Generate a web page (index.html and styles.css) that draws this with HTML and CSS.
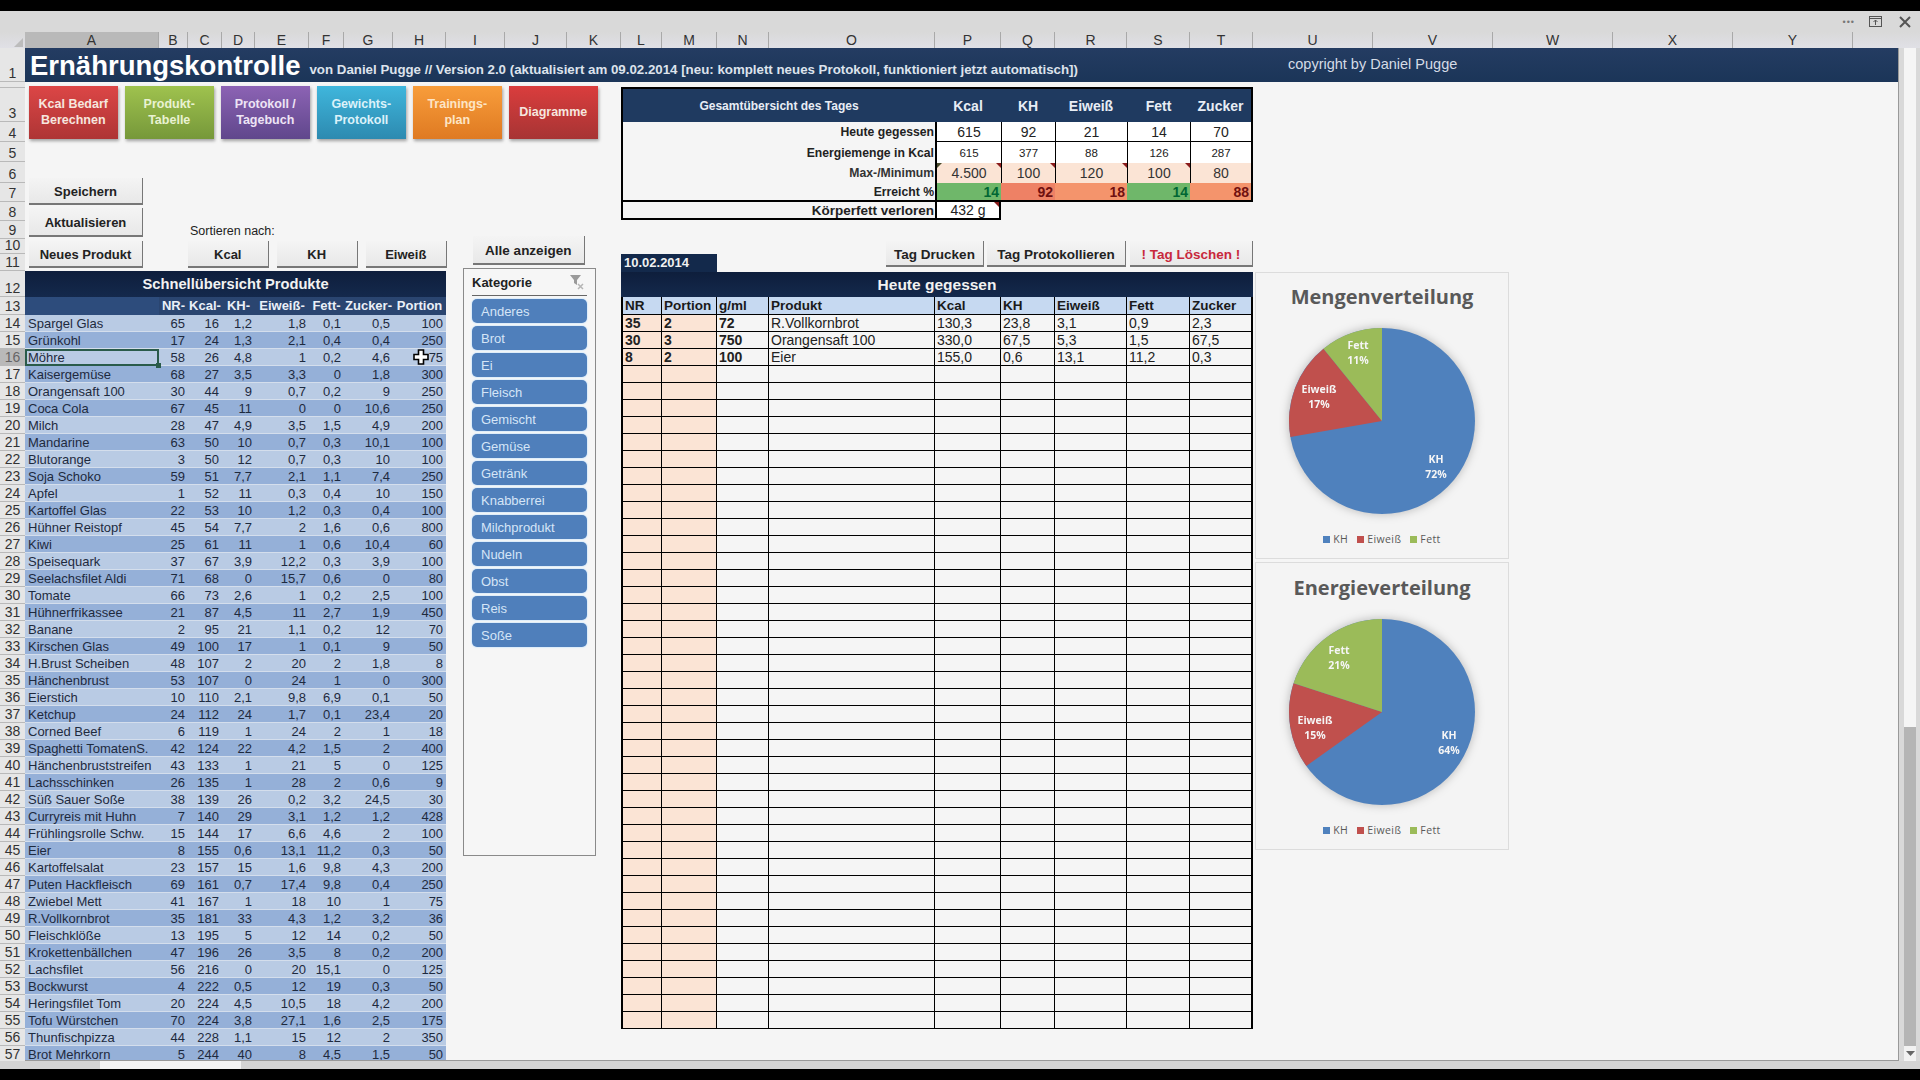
FILE: index.html
```html
<!DOCTYPE html>
<html lang="de">
<head>
    <meta charset="UTF-8">
    <title>Ernährungskontrolle</title>
    <link rel="stylesheet" href="styles.css">
</head>
<body>

<div class="black-bar"></div>

<div class="window-bar">
    <span class="window-dots">•••</span>
    <svg class="window-restore" width="14" height="12" viewBox="0 0 14 12">
        <rect x="0.5" y="0.5" width="12" height="10" fill="none" stroke="#555"/>
        <path d="M0.5 2.5H12.5M6.5 9V4M4.5 6L6.5 4L8.5 6" fill="none" stroke="#555"/>
    </svg>
    <svg class="window-close" width="12" height="12" viewBox="0 0 12 12">
        <path d="M1 1L11 11M11 1L1 11" stroke="#555" stroke-width="2"/>
    </svg>
</div>

<div class="col-head">
    <div class="corner"><span class="corner-mark"></span></div>
    <div class="col-selected">A</div><div>B</div><div>C</div><div>D</div><div>E</div><div>F</div><div>G</div><div>H</div>
    <div>I</div><div>J</div><div>K</div><div>L</div><div>M</div><div>N</div><div>O</div><div>P</div><div>Q</div>
    <div>R</div><div>S</div><div>T</div><div>U</div><div>V</div><div>W</div><div>X</div><div>Y</div><div></div>
</div>

<div class="workspace">
    <div class="row-head">
        <div>1</div><div></div><div>3</div><div>4</div><div>5</div><div>6</div><div>7</div><div>8</div><div>9</div><div>10</div>
        <div>11</div><div>12</div><div>13</div><div>14</div><div>15</div><div class="row-selected">16</div><div>17</div><div>18</div><div>19</div><div>20</div>
        <div>21</div><div>22</div><div>23</div><div>24</div><div>25</div><div>26</div><div>27</div><div>28</div><div>29</div><div>30</div>
        <div>31</div><div>32</div><div>33</div><div>34</div><div>35</div><div>36</div><div>37</div><div>38</div><div>39</div><div>40</div>
        <div>41</div><div>42</div><div>43</div><div>44</div><div>45</div><div>46</div><div>47</div><div>48</div><div>49</div><div>50</div>
        <div>51</div><div>52</div><div>53</div><div>54</div><div>55</div><div>56</div><div>57</div>
    </div>

    <div class="sheet">
        <div class="title-band">
            <div class="title-main">
                <h1>Ernährungskontrolle</h1>
                <span class="title-sub">von Daniel Pugge // Version 2.0 (aktualisiert am 09.02.2014 [neu: komplett neues Protokoll, funktioniert jetzt automatisch])</span>
            </div>
            <span class="copyright">copyright by Daniel Pugge</span>
        </div>

        <div class="sheet-body">
            <div class="left-pane">
                <div class="nav-row">
                    <a class="nav-btn nav-red">Kcal Bedarf<br>Berechnen</a>
                    <a class="nav-btn nav-green">Produkt-<br>Tabelle</a>
                    <a class="nav-btn nav-purple">Protokoll /<br>Tagebuch</a>
                    <a class="nav-btn nav-teal">Gewichts-<br>Protokoll</a>
                    <a class="nav-btn nav-orange">Trainings-<br>plan</a>
                    <a class="nav-btn nav-crimson">Diagramme</a>
                </div>

                <div class="lower">
                    <div class="products">
                        <div class="tools">
                            <div class="side-btns">
                                <button class="btn btn-save">Speichern</button>
                                <button class="btn btn-update">Aktualisieren</button>
                                <button class="btn btn-new">Neues Produkt</button>
                            </div>
                            <div class="sort">
                                <span class="sort-label">Sortieren nach:</span>
                                <div class="sort-btns">
                                    <button class="btn">Kcal</button>
                                    <button class="btn">KH</button>
                                    <button class="btn">Eiweiß</button>
                                </div>
                            </div>
                        </div>

                        <table class="product-table">
                            <colgroup>
                                <col class="w134"><col class="w29"><col class="w34"><col class="w33"><col class="w54"><col class="w35"><col class="w49"><col class="w53">
                            </colgroup>
                            <thead>
                                <tr class="product-title"><th colspan="8">Schnellübersicht Produkte</th></tr>
                                <tr class="product-head"><th class="name-head"></th><th>NR-</th><th>Kcal-</th><th>KH-</th><th>Eiweiß-</th><th>Fett-</th><th>Zucker-</th><th>Portion</th></tr>
                            </thead>
                            <tbody>
                                <tr><td>Spargel Glas</td><td>65</td><td>16</td><td>1,2</td><td>1,8</td><td>0,1</td><td>0,5</td><td>100</td></tr>
                                <tr><td>Grünkohl</td><td>17</td><td>24</td><td>1,3</td><td>2,1</td><td>0,4</td><td>0,4</td><td>250</td></tr>
                                <tr><td class="cell-active">Möhre</td><td>58</td><td>26</td><td>4,8</td><td>1</td><td>0,2</td><td>4,6</td><td class="cell-cursor">75
                                    <svg class="cross-cursor" width="16" height="16" viewBox="0 0 16 16"><path d="M5.5 1H10.5V5.5H15V10.5H10.5V15H5.5V10.5H1V5.5H5.5Z" fill="#fff" stroke="#000" stroke-width="1.6"/></svg></td></tr>
                                <tr><td>Kaisergemüse</td><td>68</td><td>27</td><td>3,5</td><td>3,3</td><td>0</td><td>1,8</td><td>300</td></tr>
                                <tr><td>Orangensaft 100</td><td>30</td><td>44</td><td>9</td><td>0,7</td><td>0,2</td><td>9</td><td>250</td></tr>
                                <tr><td>Coca Cola</td><td>67</td><td>45</td><td>11</td><td>0</td><td>0</td><td>10,6</td><td>250</td></tr>
                                <tr><td>Milch</td><td>28</td><td>47</td><td>4,9</td><td>3,5</td><td>1,5</td><td>4,9</td><td>200</td></tr>
                                <tr><td>Mandarine</td><td>63</td><td>50</td><td>10</td><td>0,7</td><td>0,3</td><td>10,1</td><td>100</td></tr>
                                <tr><td>Blutorange</td><td>3</td><td>50</td><td>12</td><td>0,7</td><td>0,3</td><td>10</td><td>100</td></tr>
                                <tr><td>Soja Schoko</td><td>59</td><td>51</td><td>7,7</td><td>2,1</td><td>1,1</td><td>7,4</td><td>250</td></tr>
                                <tr><td>Apfel</td><td>1</td><td>52</td><td>11</td><td>0,3</td><td>0,4</td><td>10</td><td>150</td></tr>
                                <tr><td>Kartoffel Glas</td><td>22</td><td>53</td><td>10</td><td>1,2</td><td>0,3</td><td>0,4</td><td>100</td></tr>
                                <tr><td>Hühner Reistopf</td><td>45</td><td>54</td><td>7,7</td><td>2</td><td>1,6</td><td>0,6</td><td>800</td></tr>
                                <tr><td>Kiwi</td><td>25</td><td>61</td><td>11</td><td>1</td><td>0,6</td><td>10,4</td><td>60</td></tr>
                                <tr><td>Speisequark</td><td>37</td><td>67</td><td>3,9</td><td>12,2</td><td>0,3</td><td>3,9</td><td>100</td></tr>
                                <tr><td>Seelachsfilet Aldi</td><td>71</td><td>68</td><td>0</td><td>15,7</td><td>0,6</td><td>0</td><td>80</td></tr>
                                <tr><td>Tomate</td><td>66</td><td>73</td><td>2,6</td><td>1</td><td>0,2</td><td>2,5</td><td>100</td></tr>
                                <tr><td>Hühnerfrikassee</td><td>21</td><td>87</td><td>4,5</td><td>11</td><td>2,7</td><td>1,9</td><td>450</td></tr>
                                <tr><td>Banane</td><td>2</td><td>95</td><td>21</td><td>1,1</td><td>0,2</td><td>12</td><td>70</td></tr>
                                <tr><td>Kirschen Glas</td><td>49</td><td>100</td><td>17</td><td>1</td><td>0,1</td><td>9</td><td>50</td></tr>
                                <tr><td>H.Brust Scheiben</td><td>48</td><td>107</td><td>2</td><td>20</td><td>2</td><td>1,8</td><td>8</td></tr>
                                <tr><td>Hänchenbrust</td><td>53</td><td>107</td><td>0</td><td>24</td><td>1</td><td>0</td><td>300</td></tr>
                                <tr><td>Eierstich</td><td>10</td><td>110</td><td>2,1</td><td>9,8</td><td>6,9</td><td>0,1</td><td>50</td></tr>
                                <tr><td>Ketchup</td><td>24</td><td>112</td><td>24</td><td>1,7</td><td>0,1</td><td>23,4</td><td>20</td></tr>
                                <tr><td>Corned Beef</td><td>6</td><td>119</td><td>1</td><td>24</td><td>2</td><td>1</td><td>18</td></tr>
                                <tr><td>Spaghetti TomatenS.</td><td>42</td><td>124</td><td>22</td><td>4,2</td><td>1,5</td><td>2</td><td>400</td></tr>
                                <tr><td>Hänchenbruststreifen</td><td>43</td><td>133</td><td>1</td><td>21</td><td>5</td><td>0</td><td>125</td></tr>
                                <tr><td>Lachsschinken</td><td>26</td><td>135</td><td>1</td><td>28</td><td>2</td><td>0,6</td><td>9</td></tr>
                                <tr><td>Süß Sauer Soße</td><td>38</td><td>139</td><td>26</td><td>0,2</td><td>3,2</td><td>24,5</td><td>30</td></tr>
                                <tr><td>Curryreis mit Huhn</td><td>7</td><td>140</td><td>29</td><td>3,1</td><td>1,2</td><td>1,2</td><td>428</td></tr>
                                <tr><td>Frühlingsrolle Schw.</td><td>15</td><td>144</td><td>17</td><td>6,6</td><td>4,6</td><td>2</td><td>100</td></tr>
                                <tr><td>Eier</td><td>8</td><td>155</td><td>0,6</td><td>13,1</td><td>11,2</td><td>0,3</td><td>50</td></tr>
                                <tr><td>Kartoffelsalat</td><td>23</td><td>157</td><td>15</td><td>1,6</td><td>9,8</td><td>4,3</td><td>200</td></tr>
                                <tr><td>Puten Hackfleisch</td><td>69</td><td>161</td><td>0,7</td><td>17,4</td><td>9,8</td><td>0,4</td><td>250</td></tr>
                                <tr><td>Zwiebel Mett</td><td>41</td><td>167</td><td>1</td><td>18</td><td>10</td><td>1</td><td>75</td></tr>
                                <tr><td>R.Vollkornbrot</td><td>35</td><td>181</td><td>33</td><td>4,3</td><td>1,2</td><td>3,2</td><td>36</td></tr>
                                <tr><td>Fleischklöße</td><td>13</td><td>195</td><td>5</td><td>12</td><td>14</td><td>0,2</td><td>50</td></tr>
                                <tr><td>Krokettenbällchen</td><td>47</td><td>196</td><td>26</td><td>3,5</td><td>8</td><td>0,2</td><td>200</td></tr>
                                <tr><td>Lachsfilet</td><td>56</td><td>216</td><td>0</td><td>20</td><td>15,1</td><td>0</td><td>125</td></tr>
                                <tr><td>Bockwurst</td><td>4</td><td>222</td><td>0,5</td><td>12</td><td>19</td><td>0,3</td><td>50</td></tr>
                                <tr><td>Heringsfilet Tom</td><td>20</td><td>224</td><td>4,5</td><td>10,5</td><td>18</td><td>4,2</td><td>200</td></tr>
                                <tr><td>Tofu Würstchen</td><td>70</td><td>224</td><td>3,8</td><td>27,1</td><td>1,6</td><td>2,5</td><td>175</td></tr>
                                <tr><td>Thunfischpizza</td><td>44</td><td>228</td><td>1,1</td><td>15</td><td>12</td><td>2</td><td>350</td></tr>
                                <tr><td>Brot Mehrkorn</td><td>5</td><td>244</td><td>40</td><td>8</td><td>4,5</td><td>1,5</td><td>50</td></tr>
                            </tbody>
                        </table>
                    </div>

                    <div class="filter">
                        <button class="btn btn-all">Alle anzeigen</button>
                        <div class="slicer">
                            <div class="slicer-head">
                                <span>Kategorie</span>
                                <svg width="16" height="16" viewBox="0 0 16 16">
                                    <path d="M1 1H12L8 6V11L5 9V6Z" fill="#9a9a9a"/>
                                    <path d="M9 10L14 15M14 10L9 15" stroke="#b5b5b5" stroke-width="1.5"/>
                                </svg>
                            </div>
                            <div class="slicer-item">Anderes</div>
                            <div class="slicer-item">Brot</div>
                            <div class="slicer-item">Ei</div>
                            <div class="slicer-item">Fleisch</div>
                            <div class="slicer-item">Gemischt</div>
                            <div class="slicer-item">Gemüse</div>
                            <div class="slicer-item">Getränk</div>
                            <div class="slicer-item">Knabberrei</div>
                            <div class="slicer-item">Milchprodukt</div>
                            <div class="slicer-item">Nudeln</div>
                            <div class="slicer-item">Obst</div>
                            <div class="slicer-item">Reis</div>
                            <div class="slicer-item">Soße</div>
                        </div>
                    </div>
                </div>
            </div>

            <div class="center-pane">
                <table class="summary">
                    <colgroup>
                        <col class="w314"><col class="w66"><col class="w54"><col class="w72"><col class="w63"><col class="w63">
                    </colgroup>
                    <tr class="summary-head">
                        <th class="summary-title">Gesamtübersicht des Tages</th><th>Kcal</th><th>KH</th><th>Eiweiß</th><th>Fett</th><th>Zucker</th>
                    </tr>
                    <tr class="row-today">
                        <td class="summary-label">Heute gegessen</td><td>615</td><td>92</td><td>21</td><td>14</td><td>70</td>
                    </tr>
                    <tr class="row-energy">
                        <td class="summary-label">Energiemenge in Kcal</td><td>615</td><td>377</td><td>88</td><td>126</td><td>287</td>
                    </tr>
                    <tr class="row-limit">
                        <td class="summary-label">Max-/Minimum</td><td class="note note-left">4.500</td><td class="note">100</td><td class="note">120</td><td class="note">100</td><td>80</td>
                    </tr>
                    <tr class="row-reached">
                        <td class="summary-label">Erreicht %</td><td class="good">14</td><td class="bad">92</td><td class="worse">18</td><td class="good">14</td><td class="worse">88</td>
                    </tr>
                    <tr class="row-fat">
                        <td class="fat-label">Körperfett verloren</td><td class="fat-value note">432 g</td><td colspan="4" class="fat-rest"></td>
                    </tr>
                </table>

                <div class="day-row">
                    <div class="day-date">10.02.2014</div>
                    <button class="btn btn-print">Tag Drucken</button>
                    <button class="btn btn-log">Tag Protokollieren</button>
                    <button class="btn btn-delete">! Tag Löschen !</button>
                </div>

                <table class="today">
                    <colgroup>
                        <col class="w41"><col class="w55"><col class="w52"><col class="w166"><col class="w66"><col class="w54"><col class="w72"><col class="w63"><col class="w63">
                    </colgroup>
                    <thead>
                        <tr class="today-title"><th colspan="9">Heute gegessen</th></tr>
                        <tr class="today-head"><th>NR</th><th>Portion</th><th>g/ml</th><th>Produkt</th><th>Kcal</th><th>KH</th><th>Eiweiß</th><th>Fett</th><th>Zucker</th></tr>
                    </thead>
                    <tbody>
                        <tr><td>35</td><td>2</td><td>72</td><td>R.Vollkornbrot</td><td>130,3</td><td>23,8</td><td>3,1</td><td>0,9</td><td>2,3</td></tr>
                        <tr><td>30</td><td>3</td><td>750</td><td>Orangensaft 100</td><td>330,0</td><td>67,5</td><td>5,3</td><td>1,5</td><td>67,5</td></tr>
                        <tr><td>8</td><td>2</td><td>100</td><td>Eier</td><td>155,0</td><td>0,6</td><td>13,1</td><td>11,2</td><td>0,3</td></tr>
                        <tr><td></td><td></td><td></td><td></td><td></td><td></td><td></td><td></td><td></td></tr>
                        <tr><td></td><td></td><td></td><td></td><td></td><td></td><td></td><td></td><td></td></tr>
                        <tr><td></td><td></td><td></td><td></td><td></td><td></td><td></td><td></td><td></td></tr>
                        <tr><td></td><td></td><td></td><td></td><td></td><td></td><td></td><td></td><td></td></tr>
                        <tr><td></td><td></td><td></td><td></td><td></td><td></td><td></td><td></td><td></td></tr>
                        <tr><td></td><td></td><td></td><td></td><td></td><td></td><td></td><td></td><td></td></tr>
                        <tr><td></td><td></td><td></td><td></td><td></td><td></td><td></td><td></td><td></td></tr>
                        <tr><td></td><td></td><td></td><td></td><td></td><td></td><td></td><td></td><td></td></tr>
                        <tr><td></td><td></td><td></td><td></td><td></td><td></td><td></td><td></td><td></td></tr>
                        <tr><td></td><td></td><td></td><td></td><td></td><td></td><td></td><td></td><td></td></tr>
                        <tr><td></td><td></td><td></td><td></td><td></td><td></td><td></td><td></td><td></td></tr>
                        <tr><td></td><td></td><td></td><td></td><td></td><td></td><td></td><td></td><td></td></tr>
                        <tr><td></td><td></td><td></td><td></td><td></td><td></td><td></td><td></td><td></td></tr>
                        <tr><td></td><td></td><td></td><td></td><td></td><td></td><td></td><td></td><td></td></tr>
                        <tr><td></td><td></td><td></td><td></td><td></td><td></td><td></td><td></td><td></td></tr>
                        <tr><td></td><td></td><td></td><td></td><td></td><td></td><td></td><td></td><td></td></tr>
                        <tr><td></td><td></td><td></td><td></td><td></td><td></td><td></td><td></td><td></td></tr>
                        <tr><td></td><td></td><td></td><td></td><td></td><td></td><td></td><td></td><td></td></tr>
                        <tr><td></td><td></td><td></td><td></td><td></td><td></td><td></td><td></td><td></td></tr>
                        <tr><td></td><td></td><td></td><td></td><td></td><td></td><td></td><td></td><td></td></tr>
                        <tr><td></td><td></td><td></td><td></td><td></td><td></td><td></td><td></td><td></td></tr>
                        <tr><td></td><td></td><td></td><td></td><td></td><td></td><td></td><td></td><td></td></tr>
                        <tr><td></td><td></td><td></td><td></td><td></td><td></td><td></td><td></td><td></td></tr>
                        <tr><td></td><td></td><td></td><td></td><td></td><td></td><td></td><td></td><td></td></tr>
                        <tr><td></td><td></td><td></td><td></td><td></td><td></td><td></td><td></td><td></td></tr>
                        <tr><td></td><td></td><td></td><td></td><td></td><td></td><td></td><td></td><td></td></tr>
                        <tr><td></td><td></td><td></td><td></td><td></td><td></td><td></td><td></td><td></td></tr>
                        <tr><td></td><td></td><td></td><td></td><td></td><td></td><td></td><td></td><td></td></tr>
                        <tr><td></td><td></td><td></td><td></td><td></td><td></td><td></td><td></td><td></td></tr>
                        <tr><td></td><td></td><td></td><td></td><td></td><td></td><td></td><td></td><td></td></tr>
                        <tr><td></td><td></td><td></td><td></td><td></td><td></td><td></td><td></td><td></td></tr>
                        <tr><td></td><td></td><td></td><td></td><td></td><td></td><td></td><td></td><td></td></tr>
                        <tr><td></td><td></td><td></td><td></td><td></td><td></td><td></td><td></td><td></td></tr>
                        <tr><td></td><td></td><td></td><td></td><td></td><td></td><td></td><td></td><td></td></tr>
                        <tr><td></td><td></td><td></td><td></td><td></td><td></td><td></td><td></td><td></td></tr>
                        <tr><td></td><td></td><td></td><td></td><td></td><td></td><td></td><td></td><td></td></tr>
                        <tr><td></td><td></td><td></td><td></td><td></td><td></td><td></td><td></td><td></td></tr>
                        <tr><td></td><td></td><td></td><td></td><td></td><td></td><td></td><td></td><td></td></tr>
                        <tr><td></td><td></td><td></td><td></td><td></td><td></td><td></td><td></td><td></td></tr>
                    </tbody>
                </table>
            </div>

            <div class="chart-pane">
                <div class="chart">
                    <h2>Mengenverteilung</h2>
                    <svg class="pie" width="252" height="198" viewBox="-126 -99 252 198">
                        <circle r="93" fill="#4f81bd"/>
                        <path d="M0 0L-91.6 16.1A93 93 0 0 1 -58.5 -72.3Z" fill="#c0504d"/>
                        <path d="M0 0L-58.5 -72.3A93 93 0 0 1 0 -93Z" fill="#9bbb59"/>
                        <text class="pie-label" x="-24" y="-72">Fett</text>
                        <text class="pie-label" x="-24" y="-57">11%</text>
                        <text class="pie-label" x="-63" y="-28">Eiweiß</text>
                        <text class="pie-label" x="-63" y="-13">17%</text>
                        <text class="pie-label" x="54" y="42">KH</text>
                        <text class="pie-label" x="54" y="57">72%</text>
                    </svg>
                    <div class="legend">
                        <span class="legend-item"><i class="swatch swatch-blue"></i>KH</span>
                        <span class="legend-item"><i class="swatch swatch-red"></i>Eiweiß</span>
                        <span class="legend-item"><i class="swatch swatch-green"></i>Fett</span>
                    </div>
                </div>
                <div class="chart chart-energy">
                    <h2>Energieverteilung</h2>
                    <svg class="pie" width="252" height="198" viewBox="-126 -99 252 198">
                        <circle r="93" fill="#4f81bd"/>
                        <path d="M0 0L-75.7 54A93 93 0 0 1 -88.4 -28.7Z" fill="#c0504d"/>
                        <path d="M0 0L-88.4 -28.7A93 93 0 0 1 0 -93Z" fill="#9bbb59"/>
                        <text class="pie-label" x="-43" y="-58">Fett</text>
                        <text class="pie-label" x="-43" y="-43">21%</text>
                        <text class="pie-label" x="-67" y="12">Eiweiß</text>
                        <text class="pie-label" x="-67" y="27">15%</text>
                        <text class="pie-label" x="67" y="27">KH</text>
                        <text class="pie-label" x="67" y="42">64%</text>
                    </svg>
                    <div class="legend">
                        <span class="legend-item"><i class="swatch swatch-blue"></i>KH</span>
                        <span class="legend-item"><i class="swatch swatch-red"></i>Eiweiß</span>
                        <span class="legend-item"><i class="swatch swatch-green"></i>Fett</span>
                    </div>
                </div>
            </div>
        </div>
    </div>

    <div class="v-scroll">
        <div class="scroll-arrow"><svg width="9" height="5" viewBox="0 0 9 5"><path d="M0 5L4.5 0L9 5Z" fill="#666"/></svg></div>
        <div class="scroll-light"></div>
        <div class="scroll-dark"></div>
        <div class="scroll-arrow"><svg width="9" height="5" viewBox="0 0 9 5"><path d="M0 0L4.5 5L9 0Z" fill="#666"/></svg></div>
    </div>
</div>

<div class="h-scroll"><span class="h-thumb"></span></div>
<div class="black-bar black-bar-bottom"></div>

</body>
</html>
```

FILE: styles.css
```css
* {
    box-sizing: border-box;
}
html, body {
    height: 100%;
}
body {
    margin: 0;
    width: 1920px;
    height: 1080px;
    overflow: hidden;
    display: flex;
    flex-direction: column;
    font-family: "Liberation Sans", Arial, sans-serif;
    font-size: 13px;
    color: #222;
    background-color: #f5f5f5;
}
h1, h2 {
    margin: 0;
}

/* window chrome */
.black-bar {
    height: 11px;
    flex: none;
    background-color: #000;
}
.black-bar-bottom {
    height: 11px;
}
.window-bar {
    height: 21px;
    flex: none;
    display: flex;
    align-items: center;
    background-color: #d9d9d9;
    padding-right: 9px;
}
.window-dots {
    margin-left: auto;
    font-size: 9px;
    letter-spacing: 1px;
    color: #777;
}
.window-restore {
    margin-left: 14px;
}
.window-close {
    margin-left: 16px;
}

/* column and row headers */
.col-head {
    height: 16px;
    flex: none;
    display: grid;
    grid-template-columns: 25px 134px 29px 34px 33px 54px 35px 49px 53px 59px 62px 54px 41px 55px 52px 166px 66px 54px 72px 63px 63px 120px 120px 120px 120px 120px 1fr;
    background: linear-gradient(#d9d9d9, #e0e0e6);
    font-size: 14px;
    line-height: 16px;
    text-align: center;
    color: #333;
}
.col-head div {
    border-right: 1px solid #a9a9a9;
}
.col-head .corner {
    border-right: none;
    position: relative;
}
.corner-mark {
    position: absolute;
    right: 2px;
    bottom: 1px;
    border-left: 9px solid transparent;
    border-bottom: 9px solid #bcbcbc;
}
.col-head .col-selected {
    background-color: #b9b9b9;
}
.col-head div:last-child {
    border-right: none;
}
.workspace {
    flex: 1;
    min-height: 0;
    display: flex;
    overflow: hidden;
}
.row-head {
    width: 25px;
    flex: none;
    display: grid;
    grid-template-rows: 34px 6px 34px 20px 20px 21px 19px 19px 18px 15px 17px 26px 18px repeat(44, 17px);
    background-color: #e6e6e6;
    font-size: 14px;
    line-height: 14px;
    text-align: center;
    color: #333;
}
.row-head div {
    display: flex;
    align-items: flex-end;
    justify-content: center;
    padding-bottom: 1px;
    border-bottom: 1px solid #b9b9b9;
}
.row-head .row-selected {
    background-color: #b9b9b9;
    color: #666;
}

/* sheet */
.sheet {
    width: 1873px;
    flex: none;
    display: flex;
    flex-direction: column;
    border-bottom: 1px solid #999;
    overflow: hidden;
}
.title-band {
    height: 34px;
    flex: none;
    display: grid;
    grid-template-columns: 1263px 1fr;
    background: linear-gradient(#243c62, #1b3558);
    color: #fff;
}
.title-main {
    display: flex;
    align-items: center;
    padding-left: 5px;
}
h1 {
    font-size: 27.5px;
    line-height: 36px;
    font-weight: bold;
}
.title-sub {
    margin-left: 9px;
    margin-top: 7px;
    font-size: 13.3px;
    font-weight: bold;
    color: #dde3ec;
}
.copyright {
    font-size: 14.5px;
    line-height: 33px;
    color: #d5dbe6;
}
.sheet-body {
    flex: 1;
    display: flex;
}
.left-pane {
    width: 596px;
    flex: none;
}

/* coloured navigation buttons */
.nav-row {
    display: flex;
    gap: 7.5px;
    margin: 4px 0 0 4px;
}
.nav-btn {
    width: 88.5px;
    height: 53px;
    padding-bottom: 2px;
    display: flex;
    align-items: center;
    justify-content: center;
    text-align: center;
    font-size: 12.5px;
    line-height: 16px;
    font-weight: bold;
    color: #f6e6df;
    box-shadow: 1px 2px 3px rgba(0, 0, 0, 0.35);
}
.nav-red {
    background: linear-gradient(#dc4646, #ae3535);
}
.nav-green {
    background: linear-gradient(#9fc24e, #76983a);
    color: #e9f2d2;
}
.nav-purple {
    background: linear-gradient(#8c63b4, #60478c);
    color: #eee4f5;
}
.nav-teal {
    background: linear-gradient(#3fb6dc, #2d8ab0);
    color: #dcf2fa;
}
.nav-orange {
    background: linear-gradient(#f89d3b, #df7a22);
    color: #fde5c6;
}
.nav-crimson {
    background: linear-gradient(#da3d3d, #a73434);
}

/* grey form buttons */
.btn {
    font-family: inherit;
    font-size: 13px;
    font-weight: bold;
    color: #222;
    padding: 2px 0 0;
    background: linear-gradient(#f4f4f4, #e8e8e8);
    border: none;
    border-right: 1px solid #777;
    border-bottom: 2px solid #777;
}
.lower {
    display: flex;
}
.products {
    width: 421px;
    flex: none;
}
.tools {
    height: 132px;
    display: flex;
}
.side-btns {
    width: 163px;
    padding: 39px 0 0 4px;
    flex: none;
}
.side-btns .btn {
    display: block;
    width: 114px;
}
.btn-save {
    height: 27px;
}
.btn-update {
    height: 29px;
    margin-top: 3px;
}
.btn-new {
    height: 27px;
    margin-top: 4px;
}
.sort {
    flex: 1;
    padding-top: 85px;
}
.sort-label {
    display: block;
    font-size: 12.5px;
    line-height: 14px;
    margin-left: 2px;
}
.sort-btns {
    display: flex;
    gap: 8.5px;
    margin-top: 3px;
}
.sort-btns .btn {
    width: 80.5px;
    height: 27px;
}

/* product table */
table {
    table-layout: fixed;
    border-collapse: separate;
    border-spacing: 0;
}
.w29 { width: 29px; }
.w33 { width: 33px; }
.w34 { width: 34px; }
.w35 { width: 35px; }
.w41 { width: 41px; }
.w49 { width: 49px; }
.w52 { width: 52px; }
.w53 { width: 53px; }
.w54 { width: 54px; }
.w55 { width: 55px; }
.w63 { width: 63px; }
.w66 { width: 66px; }
.w72 { width: 72px; }
.w134 { width: 134px; }
.w166 { width: 166px; }
.w314 { width: 314px; }

.product-table {
    width: 421px;
}
.product-title th {
    height: 26px;
    padding: 0;
    font-size: 14.7px;
    color: #f2f2f2;
    background: linear-gradient(#0e1e3c, #14294c);
}
.product-head th {
    height: 18px;
    padding: 0 0 1px;
    font-size: 13px;
    line-height: 16px;
    color: #eaf0f8;
    white-space: nowrap;
    background-color: #2a4570;
}
.product-head .name-head {
    background-color: #2d4c7c;
}
.product-table td {
    height: 17px;
    padding: 1px 3px 0;
    line-height: 16px;
    text-align: right;
    white-space: nowrap;
    color: #1e2a3e;
    box-shadow: inset 0 -1px 0 #d4deec;
}
.product-table td:first-child {
    text-align: left;
}
.product-table tbody tr:nth-child(odd) td {
    background-color: #b9cbe4;
}
.product-table tbody tr:nth-child(even) td {
    background-color: #95b0d8;
}
.product-table .cell-active {
    position: relative;
    outline: 2px solid #2a5b4a;
    outline-offset: -2px;
}
.cell-active::after {
    content: "";
    position: absolute;
    right: -2px;
    bottom: -2px;
    width: 5px;
    height: 5px;
    background-color: #2a5b4a;
}
.cell-cursor {
    position: relative;
}
.cross-cursor {
    position: absolute;
    left: 20px;
    top: 0;
}

/* slicer */
.filter {
    width: 175px;
    flex: none;
    padding-top: 97px;
}
.btn-all {
    display: block;
    width: 111.5px;
    height: 29px;
    margin-left: 27px;
    font-size: 13.5px;
}
.slicer {
    width: 132.5px;
    height: 588px;
    margin: 3px 0 0 17px;
    padding: 0 8px;
    border: 1px solid #8a8a8a;
    background-color: #f6f6f6;
}
.slicer-head {
    height: 27px;
    display: flex;
    align-items: center;
    justify-content: space-between;
    margin-bottom: 3px;
    border-bottom: 1px solid #666;
    font-size: 13px;
    font-weight: bold;
}
.slicer-head svg {
    margin-right: 2px;
}
.slicer-item {
    height: 24px;
    margin-bottom: 3px;
    padding-left: 9px;
    border-radius: 5px;
    background-color: #4f7fbb;
    box-shadow: 0 0 1px 1px #dcedfb;
    line-height: 25px;
    color: #d5e5f7;
}

/* daily summary */
.center-pane {
    width: 632px;
    flex: none;
    padding-top: 5px;
}
.summary {
    width: 632px;
}
.summary th {
    padding: 0;
    height: 35px;
    font-size: 14px;
    color: #e8edf5;
    background-color: #1f3a60;
    border-top: 2px solid #000;
}
.summary th:first-child {
    border-left: 2px solid #000;
}
.summary th:last-child {
    border-right: 2px solid #000;
}
.summary .summary-title {
    font-size: 12px;
}
.summary td {
    padding: 0;
    text-align: center;
    font-size: 14px;
    background-color: #fff;
    border-left: 1px solid #000;
}
.summary td:nth-child(2) {
    border-left: 2px solid #000;
}
.summary .summary-label {
    text-align: right;
    font-size: 12.2px;
    font-weight: bold;
    padding-right: 1px;
    border-left: 2px solid #000;
    background-color: #f5f5f5;
}
.summary td:last-child {
    border-right: 2px solid #000;
}
.row-today td {
    height: 20px;
    border-bottom: 1px solid #000;
}
.summary .row-today .summary-label,
.summary .row-energy .summary-label,
.summary .row-limit .summary-label {
    border-bottom: none;
}
.row-energy td {
    height: 21px;
    font-size: 11.5px;
}
.summary .row-energy td:not(.summary-label) {
    font-size: 11.5px;
}
.row-limit td {
    height: 20px;
    background-color: #fbe4d5;
    color: #333;
}
.row-reached td {
    height: 19px;
    text-align: right;
    font-weight: bold;
    padding-right: 2px;
    border-left: none;
    border-bottom: 2px solid #000;
}
.summary .row-reached .good {
    background-color: #6fb76a;
    color: #063;
}
.summary .row-reached .bad {
    background-color: #ee8165;
    color: #701010;
}
.summary .row-reached .worse {
    background-color: #f4946c;
    color: #701010;
}
.row-fat td {
    height: 18px;
}
.summary .fat-label {
    text-align: right;
    font-size: 13.5px;
    font-weight: bold;
    padding-right: 1px;
    border-left: 2px solid #000;
    border-bottom: 2px solid #000;
    background-color: #f5f5f5;
}
.summary .fat-value {
    border-right: 2px solid #000;
    border-bottom: 2px solid #000;
    border-left: 1px solid #000;
}
.summary td.fat-rest {
    border: none;
    background-color: transparent;
}
.note {
    position: relative;
}
.note::after {
    content: "";
    position: absolute;
    right: 0;
    top: 0;
    border-left: 5px solid transparent;
    border-top: 5px solid #8a1c1c;
}
.note-left::before {
    content: "";
    position: absolute;
    left: 0;
    top: 0;
    border-right: 5px solid transparent;
    border-top: 5px solid #4a4a2a;
}

/* today's log */
.day-row {
    height: 31px;
    margin-top: 21px;
    display: flex;
    align-items: flex-start;
}
.day-date {
    width: 96px;
    height: 18px;
    margin-top: 13px;
    margin-right: auto;
    padding-left: 3px;
    background-color: #13294b;
    color: #f0f0f0;
    font-size: 13px;
    font-weight: bold;
    line-height: 18px;
}
.day-row .btn {
    height: 26px;
    font-size: 13.5px;
}
.btn-print {
    width: 98px;
}
.btn-log {
    width: 139px;
    margin-left: 3px;
}
.day-row .btn-delete {
    width: 123px;
    margin-left: 4px;
    color: #c8283c;
}
.today {
    width: 632px;
}
.today-title th {
    height: 25px;
    padding: 0;
    font-size: 15.5px;
    color: #f2f2f2;
    background: linear-gradient(#0e1e3c, #14294c);
}
.today-head th {
    height: 18px;
    padding: 0 2px;
    text-align: left;
    font-size: 13.5px;
    line-height: 16px;
    color: #1a1a1a;
    background-color: #c6d9f1;
    border-right: 1px solid #000;
    border-bottom: 1px solid #000;
}
.today-head th:first-child {
    border-left: 2px solid #000;
}
.today-head th:last-child {
    border-right: 2px solid #000;
}
.today td {
    height: 17px;
    padding: 0 2px;
    font-size: 14px;
    line-height: 16px;
    white-space: nowrap;
    border-right: 1px solid #000;
    border-bottom: 1px solid #000;
}
.today td:first-child {
    border-left: 2px solid #000;
}
.today td:last-child {
    border-right: 2px solid #000;
}
.today td:nth-child(-n+2) {
    font-weight: bold;
    background-color: #fbe4d5;
}
.today td:nth-child(3) {
    font-weight: bold;
}

/* charts */
.chart-pane {
    padding: 190px 0 0 2px;
    display: flex;
    flex-direction: column;
    gap: 3px;
}
.chart {
    width: 254px;
    height: 287px;
    border: 1px solid #dcdcdc;
    background-color: #f4f4f4;
    text-align: center;
}
.chart-energy {
    height: 288px;
    padding-top: 1px;
}
.chart h2 {
    height: 49px;
    padding-top: 8px;
    font-family: "Open Sans", sans-serif;
    font-size: 20px;
    line-height: 32px;
    font-weight: bold;
    color: #595959;
}
.pie {
    display: block;
    filter: drop-shadow(0 0 5px rgba(0, 0, 0, 0.25));
}
.pie-label {
    font-family: "Open Sans", sans-serif;
    font-size: 10.5px;
    font-weight: bold;
    text-anchor: middle;
    fill: #f5f5f5;
}
.legend {
    margin-top: 11px;
    display: flex;
    justify-content: center;
    gap: 9px;
    font-family: "Open Sans", sans-serif;
    font-size: 10.5px;
    letter-spacing: 0.4px;
    line-height: 16px;
    color: #595959;
}
.legend-item {
    display: flex;
    align-items: center;
    gap: 3px;
}
.swatch {
    width: 7px;
    height: 7px;
}
.swatch-blue {
    background-color: #4f81bd;
}
.swatch-red {
    background-color: #c0504d;
}
.swatch-green {
    background-color: #9bbb59;
}

/* scrollbars */
.v-scroll {
    flex: 1;
    display: flex;
    flex-direction: column;
    padding: 0 4px 0 5px;
    margin-top: -16px;
    border-left: 1px solid #999;
    background-color: #d9d9d9;
    position: relative;
}
.scroll-arrow {
    height: 15px;
    flex: none;
    display: flex;
    align-items: center;
    justify-content: center;
    background-color: #f2f2f2;
}
.scroll-light {
    height: 680px;
    flex: none;
    background-color: #f5f5f5;
}
.scroll-dark {
    flex: 1;
    background-color: #b5b5b5;
}
.h-scroll {
    height: 8px;
    flex: none;
    padding-left: 100px;
    background-color: #d4d4d4;
}
.h-thumb {
    display: block;
    width: 141px;
    height: 8px;
    background-color: #f4f4f4;
}
```
